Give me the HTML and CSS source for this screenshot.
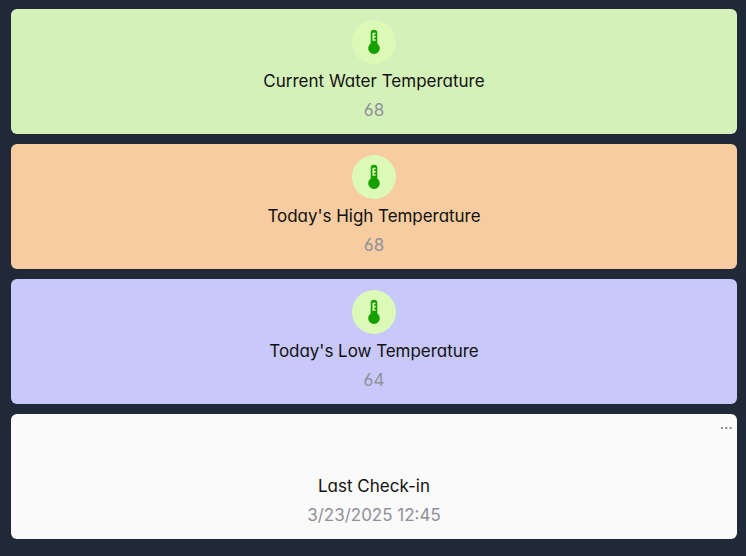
FILE: index.html
```html
<!DOCTYPE html>
<html lang="en">
<head>
<meta charset="utf-8">
<title>Water Temperature</title>
<link rel="stylesheet" href="styles.css">
</head>
<body>
<svg class="defs" width="0" height="0"><symbol id="thermo" viewBox="0 0 44 44"><path fill-rule="evenodd" d="M18.7 13a3.3 3.3 0 0 1 6.6 0V23.5a5.8 5.8 0 1 1-6.6 0ZM20.5 12.8V20.8H23.6V19.3H22V17.8H23.6V15.8H22V14.3H23.6V12.8Z"/></symbol></svg>
<main class="cards">
<section class="card current"><span class="icon"><svg><use href="#thermo"/></svg></span><h2>Current Water Temperature</h2><p>68</p></section>
<section class="card high"><span class="icon"><svg><use href="#thermo"/></svg></span><h2>Today's High Temperature</h2><p>68</p></section>
<section class="card low"><span class="icon"><svg><use href="#thermo"/></svg></span><h2>Today's Low Temperature</h2><p>64</p></section>
<section class="card checkin"><svg class="more" viewBox="0 0 12 2"><path d="M1 0h2v2H1zM5.3 0h2v2h-2zM9.6 0h2v2h-2z"/></svg><span class="icon empty"></span><h2>Last Check-in</h2><p>3/23/2025 12:45</p></section>
</main>
</body>
</html>
```
FILE: styles.css
```css
body{margin:0;background:#1f2937;font-family:Inter,sans-serif;font-feature-settings:"cv11","cv03","cv04";height:556px;overflow:hidden}
.defs{position:absolute}
.cards{display:grid;gap:10px;padding:9px 9px 0 11px}
.card{position:relative;box-sizing:border-box;height:125px;border-radius:6px;padding-top:11px;display:flex;flex-direction:column;align-items:center}
.current{background:#d5f1ba}
.high{background:#f7cca0}
.low{background:#c8c8fa}
.checkin{background:#fafafa}
.icon{width:44px;height:44px;border-radius:50%;background:#dcf9b8;flex:none}
.empty{background:none}
.icon svg{display:block;width:44px;height:44px;fill:#16a000}
h2{margin:5px 0 0;font-size:17px;line-height:24px;font-weight:400;color:#111}
.high h2,.low h2{letter-spacing:-.04px}
p{margin:5px 0 0;font-size:17px;line-height:24px;color:#909099}
.more{position:absolute;right:5px;top:13px;width:12px;height:2px;fill:#8c8c94}
```
